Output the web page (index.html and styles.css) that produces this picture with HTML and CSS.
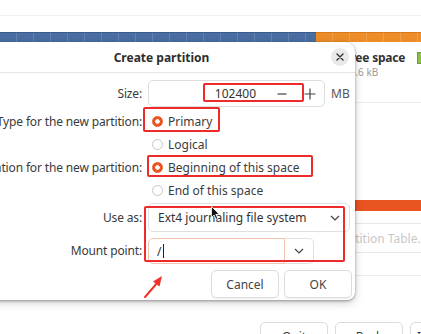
FILE: index.html
```html
<!DOCTYPE html>
<html lang="en">
<head>
	<meta charset="utf-8">
	<title>Create partition</title>
	<link rel="stylesheet" href="styles.css">
</head>
<body>
	<div class="app">
		<div class="topline"></div>
		<div class="diskbar"><div class="used"></div><div class="free"></div></div>
		<div class="side">
			<div class="legend">
				<span class="swatch swatch-free"></span>
				<div class="legend-text">
					<div class="legend-name">Free space</div>
					<div class="legend-size">46.6 kB</div>
				</div>
				<span class="swatch swatch-green"></span>
			</div>
			<div class="table">
				<div class="table-row selected"></div>
			</div>
			<div class="table-tools"><span class="flat">New Partition Table...</span></div>
		</div>
		<div class="nav">
			<button type="button" class="nav-btn">Quit</button>
			<button type="button" class="nav-btn">Back</button>
			<button type="button" class="nav-btn">Install Now</button>
		</div>
	</div>

	<div class="dialog">
		<div class="dialog-head">
			<span class="dialog-title">Create partition</span>
			<button type="button" class="close" aria-label="Close">
				<svg width="8" height="8" viewBox="0 0 8 8"><path d="M1 1L7 7M7 1L1 7" stroke="#333" stroke-width="1.4" stroke-linecap="round"/></svg>
			</button>
		</div>
		<div class="form">
			<label class="lbl lbl-size">Size:</label>
			<div class="size-row">
				<div class="spin">
					<span class="spin-value">102400</span>
					<span class="spin-btn">
						<svg width="10" height="10" viewBox="0 0 10 10"><path d="M0.5 5H9.5" stroke="#444" stroke-width="1.2"/></svg>
					</span>
					<span class="spin-btn">
						<svg width="12" height="12" viewBox="0 0 12 12"><path d="M0.5 6H11.5M6 0.5V11.5" stroke="#444" stroke-width="1.2"/></svg>
					</span>
				</div>
				<span class="unit">MB</span>
			</div>

			<label class="lbl">Type for the new partition:</label>
			<div class="radio checked">Primary</div>
			<span></span>
			<div class="radio">Logical</div>

			<label class="lbl">Location for the new partition:</label>
			<div class="radio checked">Beginning of this space</div>
			<span></span>
			<div class="radio">End of this space</div>

			<label class="lbl lbl-use">Use as:</label>
			<div class="combo">
				<span>Ext4 journaling file system</span>
				<svg width="10" height="6" viewBox="0 0 10 6"><path d="M1 1L5 5L9 1" fill="none" stroke="#444" stroke-width="1.2"/></svg>
			</div>

			<label class="lbl lbl-mount">Mount point:</label>
			<div class="mount">
				<div class="mount-entry">/<span class="caret"></span></div>
				<div class="mount-btn">
					<svg width="10" height="6" viewBox="0 0 10 6"><path d="M1 1L5 5L9 1" fill="none" stroke="#444" stroke-width="1.2"/></svg>
				</div>
			</div>
		</div>
		<div class="actions">
			<button type="button" class="btn">Cancel</button>
			<button type="button" class="btn">OK</button>
		</div>
	</div>

	<div class="mark mark-size"></div>
	<div class="mark mark-type"></div>
	<div class="mark mark-location"></div>
	<div class="mark mark-fs"></div>

	<svg class="arrow" width="24" height="26" viewBox="0 0 24 26">
		<path d="M3 24L16 9" stroke="#f2332b" stroke-width="2" stroke-linecap="round"/>
		<path d="M20 3L11 8.5L17.5 13.5Z" fill="#f2332b"/>
	</svg>

	<svg class="pointer" width="9" height="14" viewBox="0 0 9 14">
		<path d="M0.5 0.5V11.5L3 9L5 13.2L6.8 12.4L4.8 8.3H8.3Z" fill="#111" stroke="#fff" stroke-width="0.8"/>
	</svg>
</body>
</html>
```

FILE: styles.css
```css
body {
	margin: 0;
	width: 421px;
	height: 334px;
	overflow: hidden;
	position: relative;
	background: #fff;
	font-family: "Noto Sans", "Open Sans", sans-serif;
	font-size: 12px;
	color: #3c3c3c;
}
button {
	font-family: inherit;
	font-size: inherit;
	color: inherit;
}

/* installer window behind the dialog */
.topline {
	height: 15px;
	border-bottom: 1px solid #f1f1f1;
}
.diskbar {
	display: flex;
	margin-top: 16px;
	height: 10px;
}
.diskbar .used {
	width: 316px;
	background: #4a6ea3 repeating-linear-gradient(90deg, transparent 0 16px, rgba(255, 255, 255, 0.14) 16px 17px);
	border-top: 1px solid #3b5a88;
}
.diskbar .free {
	flex: 1;
	background: #ec8d28 repeating-linear-gradient(90deg, transparent 0 16px, rgba(255, 255, 255, 0.16) 16px 17px);
	border-top: 1px solid #d77b1c;
}
.side {
	margin-left: 300px;
	width: 121px;
}
.legend {
	display: flex;
	align-items: flex-start;
	padding-top: 7px;
	height: 53px;
}
.swatch {
	flex: none;
	width: 10px;
	height: 10px;
	margin-top: 3px;
	border: 1px solid #ccc;
}
.swatch-free {
	margin-left: 28px;
	margin-right: 4px;
	background: #fff;
}
.swatch-green {
	margin-left: auto;
	margin-right: -8px;
	background: #8bc34a;
	border-color: #6a9c33;
}
.legend-text {
	white-space: nowrap;
}
.legend-name {
	font-weight: bold;
	line-height: 17px;
	letter-spacing: -0.2px;
	color: #333;
}
.legend-size {
	font-size: 10px;
	line-height: 13px;
	color: #9a9a9a;
}
.table {
	border-top: 1px solid #ececec;
	height: 120px;
}
.table-row.selected {
	margin-top: 97px;
	height: 11px;
	background: #e95420;
}
.table-tools {
	height: 28px;
	border-top: 1px solid #e8e8e8;
	border-bottom: 1px solid #e8e8e8;
	display: flex;
	align-items: center;
	padding-left: 8px;
	white-space: nowrap;
}
.flat {
	color: #c8c8c8;
}
.side::after {
	content: "";
	display: block;
	margin-top: 22px;
	border-top: 1px solid #ececec;
}
.nav {
	display: flex;
	gap: 7px;
	margin-top: 46px;
	padding-left: 260px;
	white-space: nowrap;
}
.nav-btn {
	flex: none;
	width: 68px;
	height: 28px;
	background: #fff;
	border: 1px solid #dcdcdc;
	border-radius: 5px;
}

/* dialog */
.dialog {
	position: absolute;
	left: -32px;
	top: 42px;
	width: 387px;
	height: 258px;
	background: #fff;
	border-radius: 0 10px 8px 0;
	box-shadow: 0 1px 3px rgba(0, 0, 0, 0.35), 0 3px 10px rgba(0, 0, 0, 0.18);
}
.dialog-head {
	position: relative;
	height: 30px;
	border-bottom: 1px solid #e5e5e5;
	display: flex;
	align-items: center;
	justify-content: center;
}
.dialog-title {
	font-weight: bold;
	color: #2e2e2e;
}
.close {
	position: absolute;
	right: 6px;
	top: 6px;
	width: 18px;
	height: 18px;
	padding: 0;
	border: 0;
	border-radius: 50%;
	background: #e9e9e9;
	display: flex;
	align-items: center;
	justify-content: center;
}
.form {
	display: grid;
	grid-template-columns: 174px 1fr;
	grid-template-rows: 30px 23px 23px 23px 24px 35px 26px;
	column-gap: 6px;
	padding: 7px 8px 0 0;
}
.lbl {
	text-align: right;
	line-height: 23px;
	white-space: nowrap;
	letter-spacing: -0.15px;
	color: #3a3a3a;
}
.lbl-size {
	line-height: 27px;
}
.lbl-use {
	line-height: 29px;
}
.lbl-mount {
	line-height: 26px;
}
.size-row {
	display: flex;
	align-items: center;
	gap: 6px;
	height: 27px;
}
.spin {
	display: flex;
	align-items: center;
	width: 175px;
	height: 25px;
	border: 1px solid #dedede;
	border-radius: 5px;
}
.spin-value {
	flex: 1;
	text-align: right;
	padding-right: 12px;
	color: #333;
}
.spin-btn {
	width: 28px;
	display: flex;
	justify-content: center;
	align-items: center;
}
.unit {
	color: #555;
}
.radio {
	display: flex;
	align-items: center;
	gap: 5px;
	height: 23px;
	padding-left: 4px;
}
.radio::before {
	content: "";
	width: 9px;
	height: 9px;
	border: 1px solid #c6c6c6;
	border-radius: 50%;
	background: #fff;
}
.radio.checked::before {
	border-color: #e95420;
	background: radial-gradient(circle, #fff 0 2px, #e95420 2.5px);
}
.combo {
	display: flex;
	align-items: center;
	justify-content: space-between;
	height: 27px;
	padding: 0 9px 0 9px;
	border: 1px solid #e0e0e0;
	border-radius: 5px;
	color: #333;
}
.mount {
	display: flex;
	height: 26px;
}
.mount-entry {
	width: 127px;
	padding-left: 8px;
	display: flex;
	align-items: center;
	border: 1px solid #f1c2ad;
	border-radius: 5px 0 0 5px;
	color: #333;
}
.caret {
	width: 1px;
	height: 14px;
	margin-left: 2px;
	background: #222;
}
.mount-btn {
	width: 28px;
	display: flex;
	align-items: center;
	justify-content: center;
	border: 1px solid #e0e0e0;
	border-left: 0;
	border-radius: 0 5px 5px 0;
}
.actions {
	display: flex;
	justify-content: flex-end;
	gap: 5px;
	margin-top: 6px;
	padding-right: 3px;
}
.btn {
	width: 68px;
	height: 28px;
	background: #fff;
	border: 1px solid #dcdcdc;
	border-radius: 5px;
	box-shadow: 0 1px 1px rgba(0, 0, 0, 0.06);
	color: #444;
}

/* annotations drawn over the screenshot */
.mark {
	position: absolute;
	border: 2px solid #ee2b2b;
	border-radius: 2px;
}
.mark-size {
	left: 203px;
	top: 83px;
	width: 97px;
	height: 15px;
}
.mark-type {
	left: 143px;
	top: 107px;
	width: 73px;
	height: 21px;
}
.mark-location {
	left: 147px;
	top: 155px;
	width: 162px;
	height: 18px;
}
.mark-fs {
	left: 144px;
	top: 206px;
	width: 197px;
	height: 52px;
}
.arrow {
	position: absolute;
	left: 142px;
	top: 273px;
}
.pointer {
	position: absolute;
	left: 211px;
	top: 206px;
}
```
